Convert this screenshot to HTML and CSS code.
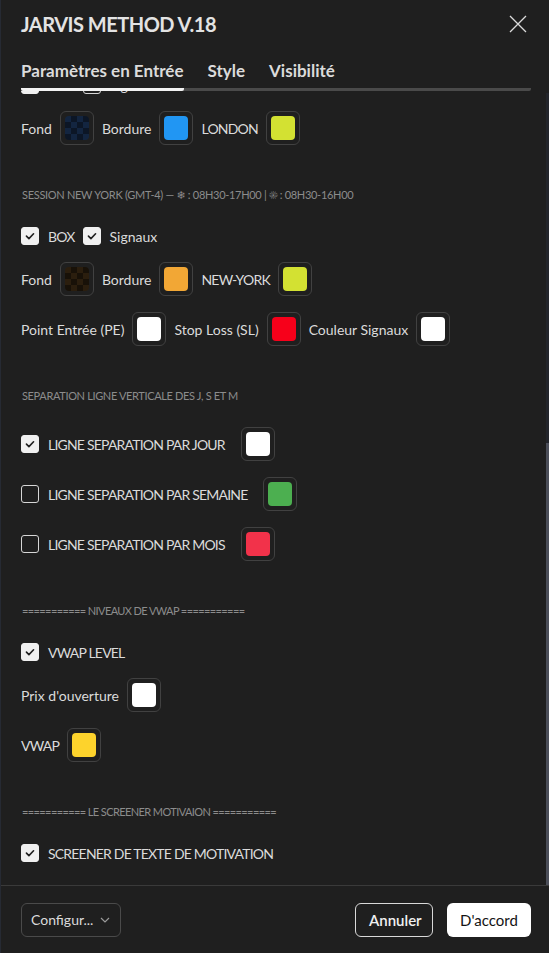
FILE: index.html
```html
<!DOCTYPE html>
<html lang="fr">
<head>
<meta charset="utf-8">
<title>JARVIS METHOD V.18</title>
<link rel="stylesheet" href="styles.css">
</head>
<body>
<div class="dialog">
  <header class="head">
    <h1 class="title">JARVIS METHOD V.18</h1>
    <button class="close" aria-label="Fermer">
      <svg width="18" height="18" viewBox="0 0 18 18"><path d="M1 1L17 17M17 1L1 17" stroke="currentColor" stroke-width="1.3" fill="none"/></svg>
    </button>
  </header>

  <nav class="tabs">
    <span class="tab active">Paramètres en Entrée</span>
    <span class="tab">Style</span>
    <span class="tab">Visibilité</span>
  </nav>

  <main class="scroll">
    <div class="content">
      <div class="row row-cb cut">
        <label class="check"><span class="cb on"><svg viewBox="0 0 18 18"><path d="M5 9.2l2.8 2.8L13 6.5"/></svg></span><span class="caps">BOX</span></label>
        <label class="check"><span class="cb"></span><span>Signaux</span></label>
      </div>
      <div class="row">
        <span class="lbl">Fond</span>
        <button class="swatch"><span class="chip checker-navy"></span></button>
        <span class="lbl">Bordure</span>
        <button class="swatch"><span class="chip c-blue"></span></button>
        <span class="lbl caps">LONDON</span>
        <button class="swatch"><span class="chip c-lime"></span></button>
      </div>

      <div class="group g-session">SESSION NEW YORK (GMT-4) — ❄ : 08H30-17H00 | ☀ : 08H30-16H00</div>
      <div class="row row-cb">
        <label class="check"><span class="cb on"><svg viewBox="0 0 18 18"><path d="M5 9.2l2.8 2.8L13 6.5"/></svg></span><span class="caps">BOX</span></label>
        <label class="check"><span class="cb on"><svg viewBox="0 0 18 18"><path d="M5 9.2l2.8 2.8L13 6.5"/></svg></span><span>Signaux</span></label>
      </div>
      <div class="row">
        <span class="lbl">Fond</span>
        <button class="swatch"><span class="chip checker-brown"></span></button>
        <span class="lbl">Bordure</span>
        <button class="swatch"><span class="chip c-orange"></span></button>
        <span class="lbl caps">NEW-YORK</span>
        <button class="swatch"><span class="chip c-lime"></span></button>
      </div>
      <div class="row">
        <span class="lbl">Point Entrée (PE)</span>
        <button class="swatch"><span class="chip c-white"></span></button>
        <span class="lbl">Stop Loss (SL)</span>
        <button class="swatch"><span class="chip c-red"></span></button>
        <span class="lbl">Couleur Signaux</span>
        <button class="swatch"><span class="chip c-white"></span></button>
      </div>

      <div class="group g-caps">SEPARATION LIGNE VERTICALE DES J, S ET M</div>
      <div class="row row-line">
        <label class="check"><span class="cb on"><svg viewBox="0 0 18 18"><path d="M5 9.2l2.8 2.8L13 6.5"/></svg></span><span class="caps">LIGNE SEPARATION PAR JOUR</span></label>
        <button class="swatch"><span class="chip c-white"></span></button>
      </div>
      <div class="row row-line">
        <label class="check"><span class="cb"></span><span class="caps">LIGNE SEPARATION PAR SEMAINE</span></label>
        <button class="swatch"><span class="chip c-green"></span></button>
      </div>
      <div class="row row-line">
        <label class="check"><span class="cb"></span><span class="caps">LIGNE SEPARATION PAR MOIS</span></label>
        <button class="swatch"><span class="chip c-pink"></span></button>
      </div>

      <div class="group g-eq">=========== NIVEAUX DE VWAP ===========</div>
      <div class="row row-cb">
        <label class="check"><span class="cb on"><svg viewBox="0 0 18 18"><path d="M5 9.2l2.8 2.8L13 6.5"/></svg></span><span class="caps">VWAP LEVEL</span></label>
      </div>
      <div class="row">
        <span class="lbl">Prix d'ouverture</span>
        <button class="swatch"><span class="chip c-white"></span></button>
      </div>
      <div class="row">
        <span class="lbl caps">VWAP</span>
        <button class="swatch"><span class="chip c-yellow"></span></button>
      </div>

      <div class="group g-eq">=========== LE SCREENER MOTIVAION ===========</div>
      <div class="row row-cb">
        <label class="check"><span class="cb on"><svg viewBox="0 0 18 18"><path d="M5 9.2l2.8 2.8L13 6.5"/></svg></span><span class="caps">SCREENER DE TEXTE DE MOTIVATION</span></label>
      </div>
    </div>
    <div class="scrollbar"><div class="thumb"></div></div>
  </main>

  <footer class="foot">
    <button class="select">Configur...<svg width="10" height="6" viewBox="0 0 10 6"><path d="M1 1l4 4 4-4" stroke="currentColor" stroke-width="1.2" fill="none"/></svg></button>
    <div class="actions">
      <button class="btn ghost">Annuler</button>
      <button class="btn primary">D'accord</button>
    </div>
  </footer>
</div>
</body>
</html>
```

FILE: styles.css
```css
* { box-sizing: border-box; }
html, body { margin: 0; height: 100%; }
body {
  background: #1f1f1f;
  color: #dbdbdb;
  font-family: Lato, "Noto Sans", "DejaVu Sans", sans-serif;
  font-size: 14px;
  overflow: hidden;
}
button { font-family: inherit; color: inherit; background: none; border: 0; padding: 0; cursor: pointer; }

.dialog {
  height: 953px;
  display: flex;
  flex-direction: column;
  border-left: 1px solid #262a33;
}

.head {
  height: 48px;
  display: flex;
  align-items: center;
  justify-content: space-between;
  padding: 0 22px 0 20px;
}
.title {
  margin: 0;
  font-size: 20px;
  line-height: 24px;
  font-weight: 700;
  color: #e3e3e3;
  letter-spacing: -0.5px;
}
.close { width: 18px; height: 18px; color: #dbdbdb; display: flex; }

.tabs {
  margin: 13px 18px 0 20px;
  display: flex;
  gap: 24px;
  background: linear-gradient(#4a4a4a, #4a4a4a) left bottom / 100% 3px no-repeat;
  border-radius: 0 0 2px 2px;
}
.tab {
  font-size: 17px;
  font-weight: 700;
  line-height: 20px;
  padding-bottom: 10px;
  color: #dbdbdb;
}
.tab.active { border-bottom: 3px solid #f2f2f2; padding-bottom: 7px; border-radius: 0 0 2px 2px; }

.scroll {
  flex: 1;
  position: relative;
  overflow: hidden;
}
.content {
  display: flex;
  flex-direction: column;
  gap: 16px;
  padding: 0 21px 0 20px;
}
.cut { margin-top: -16px; }

.row {
  display: flex;
  align-items: center;
  gap: 8px;
  height: 34px;
}
.row-cb { height: 20px; }
.row-line { gap: 16px; }
.lbl { white-space: nowrap; }
.caps { letter-spacing: -0.8px; }

.check { display: flex; align-items: center; gap: 9px; white-space: nowrap; }
.cb {
  width: 18px; height: 18px;
  border: 1px solid #d6d6d6;
  border-radius: 3px;
  flex: none;
  display: flex;
}
.cb.on { background: #f0f0f0; border-color: #f0f0f0; }
.cb svg { width: 16px; height: 16px; }
.cb path { stroke: #1f1f1f; stroke-width: 1.8; fill: none; stroke-linecap: round; stroke-linejoin: round; }

.swatch {
  width: 34px; height: 34px;
  border: 1px solid #414141;
  border-radius: 6px;
  display: flex;
  align-items: center;
  justify-content: center;
  flex: none;
}
.chip { width: 24px; height: 24px; border-radius: 4px; display: block; }
.c-blue { background: #2196f3; }
.c-lime { background: #d3e132; }
.c-orange { background: #f2a735; }
.c-white { background: #ffffff; }
.c-red { background: #f7001a; }
.c-green { background: #4caf50; }
.c-pink { background: #f2324a; }
.c-yellow { background: #fdd32c; }
.checker-navy {
  background: repeating-conic-gradient(#0c1626 0 25%, #132540 0 50%) 0 0 / 12px 12px;
}
.checker-brown {
  background: repeating-conic-gradient(#181108 0 25%, #2b1e0e 0 50%) 0 0 / 12px 12px;
}

.group {
  font-size: 11px;
  line-height: 16px;
  color: #8c8c8c;
  padding: 26px 0 7px 1px;
  white-space: nowrap;
}
.g-session { letter-spacing: -0.3px; }
.g-caps { letter-spacing: -0.35px; }
.g-eq { letter-spacing: -0.6px; }

.scrollbar {
  position: absolute;
  top: 2px; right: 0; bottom: 0;
  width: 3px;
  background: #23252b;
  display: flex;
  flex-direction: column;
  justify-content: flex-end;
}
.thumb { height: 442px; background: #4b4e59; }

.foot {
  height: 68px;
  flex: none;
  border-top: 1px solid #3a3a3a;
  display: flex;
  align-items: center;
  justify-content: space-between;
  padding: 0 18px 0 20px;
}
.select {
  width: 100px; height: 34px;
  border: 1px solid #4a4a4a;
  border-radius: 6px;
  display: flex;
  align-items: center;
  justify-content: space-between;
  padding: 0 10px 0 9px;
  font-size: 14px;
  color: #dbdbdb;
}
.select svg { color: #9a9a9a; }
.actions { display: flex; gap: 14px; }
.btn {
  height: 34px;
  border-radius: 6px;
  font-size: 15px;
  font-weight: 600;
  padding: 0 13px;
}
.ghost { border: 1px solid #d9d9d9; color: #f0f0f0; width: 78px; }
.primary { background: #ffffff; color: #131313; width: 84px; font-weight: 400; }
```
